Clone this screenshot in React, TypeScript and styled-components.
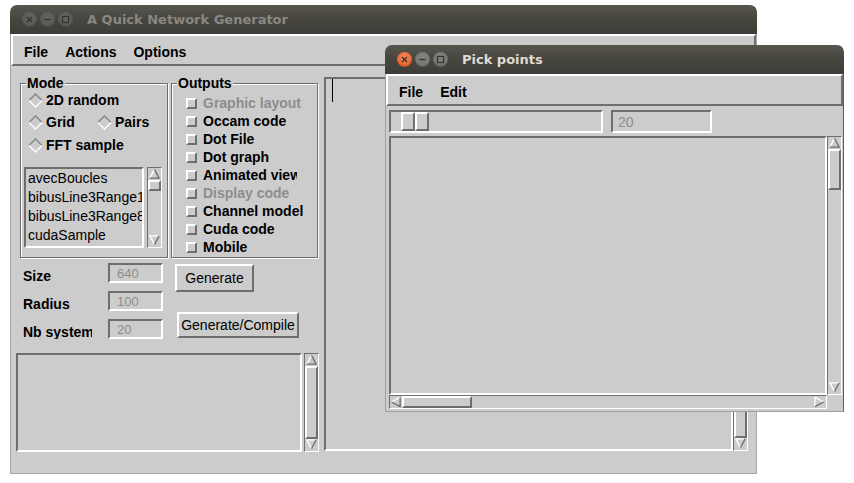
import { Fragment } from "react";
import styled, { createGlobalStyle, css } from "styled-components";

const BG = "#cccccc";
const SHADE = "#6e6e6e";
const LIGHT = "#ffffff";
const DIM = "#8c8c8c";
const UI_FONT = `"Liberation Sans", Arial, Helvetica, sans-serif`;
const TITLE_FONT = `"DejaVu Sans", "Noto Sans", sans-serif`;

const raised = css`
  border-style: solid;
  border-color: ${LIGHT} ${SHADE} ${SHADE} ${LIGHT};
`;

const sunken = css`
  border-style: solid;
  border-color: ${SHADE} ${LIGHT} ${LIGHT} ${SHADE};
`;

const GlobalStyle = createGlobalStyle`
  html, body {
    margin: 0;
    padding: 0;
    background: #ffffff;
  }
  * {
    box-sizing: border-box;
  }
`;

const Desktop = styled.div`
  position: relative;
  width: 854px;
  height: 483px;
  overflow: hidden;
  background: #ffffff;
  font-family: ${UI_FONT};
  color: #000000;
`;

const Window = styled.div<{ $x: number; $y: number; $w: number; $h: number }>`
  position: absolute;
  left: ${(p) => p.$x}px;
  top: ${(p) => p.$y}px;
  width: ${(p) => p.$w}px;
  height: ${(p) => p.$h}px;
  display: flex;
  flex-direction: column;
`;

const TitleBarBox = styled.div`
  flex: none;
  height: 29px;
  display: flex;
  align-items: center;
  padding-left: 12px;
  border-radius: 7px 7px 0 0;
  background: linear-gradient(to bottom, #575550 0%, #48473f 45%, #3c3b37 100%);
`;

const WinButtons = styled.div`
  display: flex;
  gap: 3px;
`;

const WinButton = styled.span<{ $tone: "close" | "plain"; $active: boolean }>`
  width: 15px;
  height: 15px;
  border-radius: 50%;
  display: flex;
  align-items: center;
  justify-content: center;
  background: ${(p) =>
    !p.$active
      ? "radial-gradient(circle at 50% 35%, #66645f, #55534f)"
      : p.$tone === "close"
        ? "radial-gradient(circle at 50% 35%, #f7875a, #e2501d)"
        : "radial-gradient(circle at 50% 35%, #85847f, #6d6c68)"};
  box-shadow: inset 0 -1px 0 rgba(0, 0, 0, 0.2);
`;

const TitleText = styled.span<{ $active: boolean }>`
  margin-left: 14px;
  font-family: ${TITLE_FONT};
  font-weight: 700;
  font-size: 13px;
  white-space: nowrap;
  color: ${(p) => (p.$active ? "#dfdbd2" : "#8a8782")};
`;

const Body = styled.div<{ $edge: string; $edgeRight: string }>`
  flex: 1;
  min-height: 0;
  display: flex;
  flex-direction: column;
  background: ${BG};
  border: 1px solid ${(p) => p.$edge};
  border-right-color: ${(p) => p.$edgeRight};
  border-top: none;
`;

const MenuBar = styled.div`
  flex: none;
  height: 32px;
  display: flex;
  align-items: center;
  padding: 3px 0 0 11px;
  border-width: 2px;
  ${raised};
`;

const MenuItem = styled.span`
  font-weight: 700;
  font-size: 14px;
  margin-right: 17px;
`;

/* main window */

const MainContent = styled.div`
  flex: 1;
  min-height: 0;
  display: flex;
`;

const LeftPanel = styled.div`
  flex: none;
  width: 313px;
  display: flex;
  flex-direction: column;
`;

const TopRow = styled.div`
  display: flex;
  gap: 3px;
  margin: 17px 0 0 9px;
`;

const Group = styled.div<{ $w: number }>`
  width: ${(p) => p.$w}px;
  height: 175px;
  border: 1px solid ${SHADE};
  box-shadow: inset 1px 1px 0 ${LIGHT}, 1px 1px 0 ${LIGHT};
  display: flex;
  flex-direction: column;
`;

const Legend = styled.span`
  display: block;
  width: fit-content;
  margin: -9px 0 0 5px;
  padding: 0 1px;
  background: ${BG};
  font-weight: 700;
  font-size: 14px;
  line-height: 16px;
`;

const ModeBody = styled.div`
  display: flex;
  flex-direction: column;
  padding-left: 3px;
`;

const RadioLine = styled.div<{ $gap: number }>`
  display: flex;
  align-items: center;
  height: 18px;
  margin-top: ${(p) => p.$gap}px;
  padding-left: 4px;
`;

const Radio = styled.span<{ $w?: number }>`
  display: inline-flex;
  align-items: center;
  gap: 3px;
  width: ${(p) => (p.$w ? `${p.$w}px` : "auto")};
  font-weight: 700;
  font-size: 14px;
  white-space: nowrap;
`;

const ListRow = styled.div`
  display: flex;
  gap: 3px;
  height: 81px;
  margin-top: 13px;
`;

const ListBox = styled.div`
  width: 120px;
  border-width: 2px;
  ${sunken};
  padding-left: 2px;
  overflow: hidden;
`;

const ListItem = styled.div`
  height: 19px;
  line-height: 19px;
  font-size: 14px;
  white-space: nowrap;
`;

const CheckList = styled.div`
  display: flex;
  flex-direction: column;
  padding: 3px 0 0 14px;
`;

const CheckRow = styled.div<{ $disabled?: boolean; $clip?: number }>`
  display: flex;
  align-items: center;
  gap: 6px;
  height: 18px;
  font-weight: 700;
  font-size: 14px;
  white-space: nowrap;
  overflow: hidden;
  max-width: ${(p) => (p.$clip ? `${p.$clip}px` : "none")};
  color: ${(p) => (p.$disabled ? DIM : "#000000")};
`;

const Indicator = styled.span`
  flex: none;
  width: 11px;
  height: 11px;
  border-width: 2px;
  ${raised};
  background: ${BG};
`;

const FormRow = styled.div`
  display: flex;
  margin: 5px 0 0 12px;
`;

const FieldGrid = styled.div`
  display: grid;
  grid-template-columns: 85px 55px;
  grid-auto-rows: 20px;
  row-gap: 8px;
`;

const FieldLabel = styled.span`
  width: 69px;
  overflow: hidden;
  white-space: nowrap;
  font-weight: 700;
  font-size: 14px;
  line-height: 20px;
  padding-top: 3px;
`;

const Entry = styled.div<{ $size: number; $pad: number; $w?: number }>`
  width: ${(p) => (p.$w ? `${p.$w}px` : "auto")};
  border-width: 2px;
  ${sunken};
  padding-left: ${(p) => p.$pad}px;
  display: flex;
  align-items: center;
  font-size: ${(p) => p.$size}px;
  color: ${DIM};
`;

const ButtonColumn = styled.div`
  display: flex;
  flex-direction: column;
  align-items: flex-start;
  gap: 20px;
  margin: 1px 0 0 12px;
`;

const PushButton = styled.div<{ $w: number; $h: number; $shift?: number }>`
  width: ${(p) => p.$w}px;
  height: ${(p) => p.$h}px;
  margin-left: ${(p) => p.$shift ?? 0}px;
  border-width: 2px;
  ${raised};
  display: flex;
  align-items: center;
  justify-content: center;
  font-size: 14px;
  white-space: nowrap;
`;

const LogRow = styled.div`
  display: flex;
  gap: 2px;
  height: 99px;
  margin: 14px 0 0 5px;
`;

const TextArea = styled.div<{ $w?: number }>`
  flex: ${(p) => (p.$w ? "none" : "1")};
  width: ${(p) => (p.$w ? `${p.$w}px` : "auto")};
  border-width: 2px;
  ${sunken};
  background: ${BG};
  min-width: 0;
`;

const Caret = styled.div`
  width: 1px;
  height: 23px;
  margin-left: 6px;
  background: #000000;
`;

const RightPanel = styled.div`
  flex: 1;
  min-width: 0;
  display: flex;
  padding: 11px 8px 22px 0;
`;

/* scrollbars */

const Trough = styled.div<{ $vertical: boolean }>`
  flex: none;
  display: flex;
  flex-direction: ${(p) => (p.$vertical ? "column" : "row")};
  width: ${(p) => (p.$vertical ? "15px" : "auto")};
  height: ${(p) => (p.$vertical ? "auto" : "14px")};
  border-width: 1px;
  ${sunken};
  background: ${BG};
  min-width: 0;
  min-height: 0;
`;

const Track = styled.div<{ $vertical: boolean }>`
  flex: 1;
  display: flex;
  flex-direction: ${(p) => (p.$vertical ? "column" : "row")};
  min-width: 0;
  min-height: 0;
`;

const Thumb = styled.div<{ $at: number; $len?: number; $vertical: boolean }>`
  flex: ${(p) => (p.$len ? `0 0 ${p.$len}px` : "1")};
  ${(p) => (p.$vertical ? `margin-top: ${p.$at}px;` : `margin-left: ${p.$at}px;`)}
  border-width: 2px;
  ${raised};
`;

const ArrowBox = styled.svg`
  flex: none;
  display: block;
`;

type Dir = "up" | "down" | "left" | "right";

const ARROWS: Record<Dir, { light: string; dark: string }> = {
  up: { light: "M1.5 11 L6.5 1.5", dark: "M6.5 1.5 L11.5 11 L1.5 11" },
  down: { light: "M11.5 1 L1.5 1 L6.5 10.5", dark: "M11.5 1 L6.5 10.5" },
  left: { light: "M1.5 6.5 L11 1.5", dark: "M11 1.5 L11 11.5 L1.5 6.5" },
  right: { light: "M1 11.5 L1 1.5 L10.5 6.5", dark: "M10.5 6.5 L1 11.5" },
};

function Arrow({ dir }: { dir: Dir }) {
  const vertical = dir === "up" || dir === "down";
  const a = ARROWS[dir];
  return (
    <ArrowBox width={vertical ? 13 : 12} height={12} viewBox="0 0 13 13">
      <path d={a.light} fill="none" stroke={LIGHT} strokeWidth="1.4" />
      <path d={a.dark} fill="none" stroke={SHADE} strokeWidth="1.4" />
    </ArrowBox>
  );
}

function Scrollbar({ vertical = true, at = 0, len }: { vertical?: boolean; at?: number; len?: number }) {
  return (
    <Trough $vertical={vertical}>
      <Arrow dir={vertical ? "up" : "left"} />
      <Track $vertical={vertical}>
        <Thumb $vertical={vertical} $at={at} $len={len} />
      </Track>
      <Arrow dir={vertical ? "down" : "right"} />
    </Trough>
  );
}

/* title bar */

function Glyph({ kind }: { kind: "close" | "min" | "max" }) {
  const stroke = "#33322f";
  return (
    <svg width="9" height="9" viewBox="0 0 9 9">
      {kind === "close" && <path d="M2 2 L7 7 M7 2 L2 7" stroke={stroke} strokeWidth="1.3" />}
      {kind === "min" && <path d="M1.5 4.5 L7.5 4.5" stroke={stroke} strokeWidth="1.4" />}
      {kind === "max" && <rect x="1.5" y="1.5" width="6" height="6" fill="none" stroke={stroke} strokeWidth="1.2" />}
    </svg>
  );
}

function TitleBar({ title, active }: { title: string; active: boolean }) {
  return (
    <TitleBarBox>
      <WinButtons>
        <WinButton $tone="close" $active={active}>
          <Glyph kind="close" />
        </WinButton>
        <WinButton $tone="plain" $active={active}>
          <Glyph kind="min" />
        </WinButton>
        <WinButton $tone="plain" $active={active}>
          <Glyph kind="max" />
        </WinButton>
      </WinButtons>
      <TitleText $active={active}>{title}</TitleText>
    </TitleBarBox>
  );
}

function Diamond() {
  return (
    <svg width="15" height="15" viewBox="0 0 15 15" style={{ flex: "none" }}>
      <path d="M1 7.5 L7.5 1 L14 7.5" fill="none" stroke="#858585" strokeWidth="1.3" />
      <path d="M1 7.5 L7.5 14 L14 7.5" fill="none" stroke={LIGHT} strokeWidth="1.3" />
    </svg>
  );
}

/* pick points window */

const Toolbar = styled.div`
  display: flex;
  gap: 8px;
  height: 23px;
  margin: 4px 0 0 3px;
`;

const ScaleTrough = styled.div`
  width: 214px;
  border-width: 2px;
  ${sunken};
  display: flex;
  padding-left: 10px;
`;

const ScaleHalf = styled.div`
  width: 14px;
  border-width: 2px;
  ${raised};
`;

const ScrollArea = styled.div`
  flex: 1;
  min-height: 0;
  display: grid;
  grid-template-columns: 1fr 15px;
  grid-template-rows: 1fr 14px;
  margin-top: 3px;
  padding: 0 1px 2px 3px;
`;

const Canvas = styled.div`
  border-width: 2px;
  ${sunken};
  background: ${BG};
`;

const OUTPUTS: { label: string; disabled?: boolean; clip?: number }[] = [
  { label: "Graphic layout", disabled: true },
  { label: "Occam code" },
  { label: "Dot File" },
  { label: "Dot graph" },
  { label: "Animated view", clip: 111 },
  { label: "Display code", disabled: true },
  { label: "Channel model" },
  { label: "Cuda code" },
  { label: "Mobile" },
];

const SAMPLES = ["avecBoucles", "bibusLine3Range1", "bibusLine3Range8", "cudaSample"];

const FIELDS = [
  { label: "Size", value: "640" },
  { label: "Radius", value: "100" },
  { label: "Nb system", value: "20" },
];

export default function App() {
  return (
    <Desktop>
      <GlobalStyle />

      <Window $x={10} $y={5} $w={747} $h={469}>
        <TitleBar title="A Quick Network Generator" active={false} />
        <Body $edge="#a6a6a6" $edgeRight="#a6a6a6">
          <MenuBar>
            <MenuItem>File</MenuItem>
            <MenuItem>Actions</MenuItem>
            <MenuItem>Options</MenuItem>
          </MenuBar>
          <MainContent>
            <LeftPanel>
              <TopRow>
                <Group $w={148}>
                  <Legend>Mode</Legend>
                  <ModeBody>
                    <RadioLine $gap={0}>
                      <Radio>
                        <Diamond />
                        2D random
                      </Radio>
                    </RadioLine>
                    <RadioLine $gap={4}>
                      <Radio $w={69}>
                        <Diamond />
                        Grid
                      </Radio>
                      <Radio>
                        <Diamond />
                        Pairs
                      </Radio>
                    </RadioLine>
                    <RadioLine $gap={5}>
                      <Radio>
                        <Diamond />
                        FFT sample
                      </Radio>
                    </RadioLine>
                    <ListRow>
                      <ListBox>
                        {SAMPLES.map((s) => (
                          <ListItem key={s}>{s}</ListItem>
                        ))}
                      </ListBox>
                      <Scrollbar at={0} len={11} />
                    </ListRow>
                  </ModeBody>
                </Group>
                <Group $w={147}>
                  <Legend>Outputs</Legend>
                  <CheckList>
                    {OUTPUTS.map((o) => (
                      <CheckRow key={o.label} $disabled={o.disabled} $clip={o.clip}>
                        <Indicator />
                        {o.label}
                      </CheckRow>
                    ))}
                  </CheckList>
                </Group>
              </TopRow>

              <FormRow>
                <FieldGrid>
                  {FIELDS.map((f) => (
                    <Fragment key={f.label}>
                      <FieldLabel>{f.label}</FieldLabel>
                      <Entry $size={13} $pad={7}>
                        {f.value}
                      </Entry>
                    </Fragment>
                  ))}
                </FieldGrid>
                <ButtonColumn>
                  <PushButton $w={79} $h={28}>
                    Generate
                  </PushButton>
                  <PushButton $w={122} $h={26} $shift={2}>
                    Generate/Compile
                  </PushButton>
                </ButtonColumn>
              </FormRow>

              <LogRow>
                <TextArea $w={286} />
                <Scrollbar />
              </LogRow>
            </LeftPanel>

            <RightPanel>
              <TextArea>
                <Caret />
              </TextArea>
              <Scrollbar />
            </RightPanel>
          </MainContent>
        </Body>
      </Window>

      <Window $x={385} $y={45} $w={459} $h={367}>
        <TitleBar title="Pick points" active />
        <Body $edge="#a0a0a0" $edgeRight="#5c5c5c">
          <MenuBar>
            <MenuItem>File</MenuItem>
            <MenuItem>Edit</MenuItem>
          </MenuBar>
          <Toolbar>
            <ScaleTrough>
              <ScaleHalf />
              <ScaleHalf />
            </ScaleTrough>
            <Entry $size={14} $pad={5} $w={101}>
              20
            </Entry>
          </Toolbar>
          <ScrollArea>
            <Canvas />
            <Scrollbar at={0} len={41} />
            <Scrollbar vertical={false} at={0} len={70} />
          </ScrollArea>
        </Body>
      </Window>
    </Desktop>
  );
}
